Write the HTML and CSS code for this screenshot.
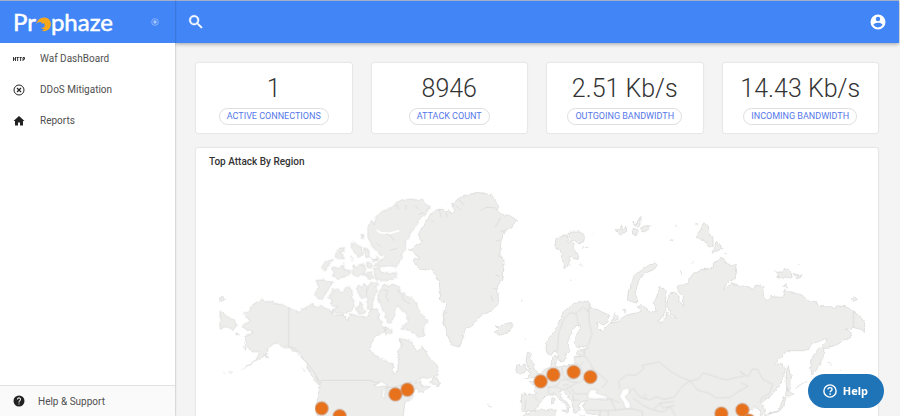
FILE: index.html
```html
<!DOCTYPE html>
<html lang="en">
<head>
<meta charset="utf-8">
<title>Prophaze Dashboard</title>
<link rel="stylesheet" href="styles.css">
</head>
<body>
<div class="app">
  <aside class="sidebar">
    <div class="brand">
      <a class="logo" href="#">Pr<svg class="logo-mark" viewBox="0 0 45 45" aria-hidden="true"><path d="M0 21C3 14 7 6 16 3c10-4 21 0 26 8 6 11 2 24-8 29-6 4-13 4-18 0 5 1 8-1 9-4-4 1-8 0-9-4 5 1 9-1 10-5 1-4-1-8-5-9l-3 4-2-6c-5-2-11 0-16 5z" fill="#f6a81c"/></svg>phaze</a>
      <button class="pin" type="button" aria-label="Pin menu"><svg viewBox="0 0 24 24"><circle cx="12" cy="12" r="10" fill="none" stroke="currentColor" stroke-width="2"/><circle cx="12" cy="12" r="5" fill="currentColor"/></svg></button>
    </div>
    <nav class="menu">
      <a class="item" href="#"><svg class="icon" viewBox="0 0 24 24"><path d="M1 8v8M5 8v8M1 12h4M7 9h4.500M9.200 9v7M13 9h4.500M15.200 9v7M20 16V9h3v3.500h-3" fill="none" stroke="currentColor" stroke-width="1.800"/></svg>Waf DashBoard</a>
      <a class="item" href="#"><svg class="icon" viewBox="0 0 24 24"><circle cx="12" cy="12" r="10" fill="none" stroke="currentColor" stroke-width="2"/><path d="M8 8l8 8M16 8l-8 8" stroke="currentColor" stroke-width="2.400"/></svg>DDoS Mitigation</a>
      <a class="item" href="#"><svg class="icon" viewBox="0 0 24 24"><path d="M10 21v-6h4v6h6v-9h3L12 2 1 12h3v9z" fill="currentColor"/></svg>Reports</a>
    </nav>
    <a class="support" href="#"><svg class="icon" viewBox="0 0 24 24"><path d="M12 1a11 11 0 1 0 0 22 11 11 0 0 0 0-22zm1 18h-2v-2h2v2zm2.070-7.750l-.9.920C13.450 12.900 13 13.500 13 15h-2v-.5c0-1.100.450-2.100 1.170-2.830l1.240-1.260A2 2 0 1 0 10 9H8a4 4 0 1 1 7.070 2.250z" fill="currentColor"/></svg>Help &amp; Support</a>
  </aside>
  <div class="page">
    <header class="topbar">
      <button type="button" aria-label="Search"><svg viewBox="0 0 24 24"><path d="M15.500 14h-.790l-.280-.270A6.500 6.500 0 1 0 13.730 14.430l.270.280v.790l5 4.990L20.490 19zm-6 0a4.500 4.500 0 1 1 0-9 4.500 4.500 0 0 1 0 9z" fill="currentColor" stroke="currentColor" stroke-width=".6"/></svg></button>
      <button type="button" aria-label="Account"><svg viewBox="0 0 24 24"><path d="M12 2a10 10 0 1 0 0 20 10 10 0 0 0 0-20zm0 3a3 3 0 1 1 0 6 3 3 0 0 1 0-6zm0 14.200a7.200 7.200 0 0 1-6-3.220c.030-1.990 4-3.080 6-3.080s5.970 1.090 6 3.080a7.200 7.200 0 0 1-6 3.220z" fill="currentColor"/></svg></button>
    </header>
    <main class="content">
      <section class="stats">
        <article class="card stat"><strong>1</strong><span>ACTIVE CONNECTIONS</span></article>
        <article class="card stat"><strong>8946</strong><span>ATTACK COUNT</span></article>
        <article class="card stat"><strong>2.51 Kb/s</strong><span>OUTGOING BANDWIDTH</span></article>
        <article class="card stat"><strong>14.43 Kb/s</strong><span>INCOMING BANDWIDTH</span></article>
      </section>
      <section class="card region">
        <h2>Top Attack By Region</h2>
        <svg class="map" viewBox="-3 0 1968 720" role="img" aria-label="World map of attacks">
          <defs><filter id="coast" x="0" y="0" width="100%" height="100%" color-interpolation-filters="sRGB"><feTurbulence type="fractalNoise" baseFrequency="0.07" numOctaves="2" seed="4"/><feDisplacementMap in="SourceGraphic" scale="12" xChannelSelector="R" yChannelSelector="G"/></filter></defs>
          <g class="land" filter="url(#coast)">
            <!-- North America -->
            <path d="M100 400L118 392 128 374 155 357 163 366 178 364 200 372 218 374 236 383 265 397 272 388 290 384 300 374 308 370 312 382 335 380 355 388 372 396 362 398 372 406 400 404 412 422 420 402 445 408 470 410 484 390 497 384 510 400 503 420 516 425 520 442 528 440 522 460 500 462 485 488 480 508 490 524 505 530 540 550 550 550 550 562 545 574 553 580 562 576 565 555 568 540 562 515 574 500 570 475 590 480 610 490 612 504 622 514 638 500 655 530 682 556 685 585 660 592 625 598 612 610 632 602 634 618 660 620 640 634 624 636 622 625 608 640 610 650 585 668 580 700 585 725 322 725 322 655 330 615 318 600 300 580 290 550 268 515 250 512 236 500 215 500 205 490 190 492 175 505 170 520 160 530 125 548 95 568 138 540 150 515 125 515 112 500 105 490 108 470 130 455 100 445 95 435 122 425z"/>
            <path d="M30 392L50 408 74 422 82 434 68 450 50 440 30 444zM28 354l8-3 8 7-8 5-8-3zM74 462l14 3-12 3zM100 498l8 2-2 8zM162 526l14 4-10 5zM40 578l7 0M55 577l12-2M275 560l12 15M314 590l18 18-6 6-16-16M672 590l12 8 6 20-28-8z"/>
            <!-- Arctic archipelago -->
            <g transform="translate(300 15)">
              <path d="M196 96L212 82 230 78 232 68 246 68 262 50 300 42 340 46 358 68 348 86 334 96 320 120 302 140 298 156 286 168 288 188 278 204 270 226 262 246 238 242 210 246 192 242 210 228 226 214 212 210 206 198 190 192 182 172 174 158 174 128 184 110 194 116z"/>
              <path d="M192 250L208 250 212 262 258 264 260 278 230 288 196 282zM170 232l14 0 4 16-16 0zM168 264l16-4 6 18-16 4zM198 214l10 4-6 8zM152 150l6 0 2 12zM124 174l10-2 6 10 12 0 6 28-16 4-8-16-10-6zM160 188l14 4 6 24-14 0zM122 212l6 16M128 242l8-2 4 10 8-12 16 2 2 32-14-4-10 8-14-8zM102 232l4 6M78 202l10-12 14-2 0 10-12 4 8 6 2 12-16 2-8-8zM34 250l10-18 22-12 4 6-14 12-4 12-12 6zM62 248l8-2 8 6 10-4 6-10 8 4-2 12 22 2-2 12-20 6-14 10-10-8-10-4 6-6zM180 222l22 0-2 6z"/>
              <path d="M22 286l20-2 10 6 16 4-14 20-14 24-14 4-12-14 10-20zM74 310l10 2 12 10 12-14 12-4 8 20-4 12 10 18-6 22-26 8-26 0-12-10 20-6-20-10 2-14-12-6zM138 308l10-8 6 4 8-6 8 6-4 34-12 2-10-18zM178 294l20-4 6 8-8 28-8 24-2 24-14-2 2-26-6-20zM140 366l8-2 2-14 6 6 2 16 10 8-12 8-14-6zM224 426l22 8 0 10-18 8z"/>
              <path d="M208 318L222 300 262 302 278 324 294 334 316 350 326 376 354 410 340 426 342 450 330 458 300 436 272 432 292 410 288 384 262 364 252 386 246 412 232 414 226 388 216 370 206 344z"/>
            </g>
            <!-- Greenland and Iceland -->
            <path d="M660 104L682 88 700 88 704 98 716 92 726 100 734 96 726 72 748 54 800 37 844 44 866 78 856 92 884 108 895 104 920 120 900 146 886 152 872 188 870 226 882 242 880 292 862 320 866 370 846 392 812 408 786 438 766 446 756 480 750 502 728 496 714 470 700 432 700 400 710 372 692 358 688 306 676 282 662 268 628 268 606 240 630 236 598 208 630 192 635 182 624 162 642 136zM856 434l12 6 16-8 18-4 8 18-34 20-22-10 10-8zM934 360l4 3-4 2M942 480h4M972 498l2 8M830 676l16 6"/>
            <!-- Europe and Asia -->
            <g transform="translate(930 0)">
              <path d="M80 485L78 510 88 525 105 512 112 520 118 545 130 545 138 525 150 510 142 488 150 465 165 440 178 437 180 450 165 470 162 490 170 502 195 498 205 504 175 508 170 520 178 528 165 530 162 550 150 556 125 560 108 562 105 550 114 532 106 526 95 535 93 560 75 570 60 580 45 600 28 605 45 620 48 645 5 642 3 690 20 697 45 690 62 665 75 650 92 645 105 640 120 660 140 675 142 692 152 680 125 655 118 635 130 632 155 665 165 700 180 692 178 670 200 660 190 675 200 700 240 706 235 725 678 725 688 706 668 682 690 690 705 680 718 690 720 705 734 700 730 680 720 672 735 660 755 645 775 620 790 595 796 570 790 555 765 550 802 512 850 512 868 508 875 490 900 484 915 475 923 480 905 500 885 520 872 540 872 565 877 587 895 560 910 530 912 505 930 500 952 495 970 480 995 472 992 455 978 448 1000 442 1034 455 1034 425 1018 408 1000 395 980 380 950 377 945 388 935 380 895 380 890 365 865 362 845 345 795 330 788 352 755 350 742 363 730 345 732 320 710 315 702 328 670 318 645 315 635 310 610 330 618 312 645 295 650 270 645 255 615 250 615 238 602 232 580 250 580 262 540 270 515 285 505 310 475 318 475 335 490 350 492 380 480 365 470 340 450 340 440 370 450 400 470 415 450 410 440 395 430 430 415 425 430 405 438 385 435 330 420 320 410 350 402 370 408 395 395 395 365 378 350 376 362 395 320 405 305 415 290 425 275 430 295 412 285 398 280 415 270 430 255 445 245 455 235 445 232 428 250 435 265 425 265 405 235 390 215 385 208 370 190 362 160 372 130 395 120 420 105 450z"/>
              <!-- British Isles, Mediterranean islands, North Africa -->
              <path d="M22 518l12 2-4 16 10 14 6 18 10 14-14 10-26 4 14-14-10-10 8-8-10-18zM0 556l14-4 6 12-4 14-16 4-14-4 4-18zM96 650l6 4-2 18-6 0zM128 690l18 2-4 8zM-4 725L16 704 60 690 106 688 102 725zM176 704l16 2"/>
              <!-- Svalbard, Franz Josef, Novaya Zemlya, Severnaya Zemlya -->
              <path d="M106 176l24-8 8-4 6 20 14 2 6 26 16 16-6 10-14-2-10-8-4 26-10 12-10-30-6-26-12-4zM146 156l34 0 14 12-4 18-16 2-22-10-12-10zM216 162l10-2M186 205l18-4M180 258l6-4M286 152l14-6 6-8 2 10 10-6-2 16-16 4zM338 126l10 6 12-20 0 22-8 8zM336 144l12 4 8 6-8 14-10-6zM362 144l14-8 16 2-6 10-14 8-8-4zM322 360l4-30 16-40 24-24 40-20 8 8-14 16-26 10-18 22-10 36 8 30-12 0zM530 176l8-20 14-28 14 14 0 22 12 6 2 26-14 6-16-24-14 0zM576 220l16-34 14 20zM468 138h6M452 180l6 3M526 130l6 2M480 270l6 14M520 244l-2 6M550 270l12-4M612 216l8 3M304 392l12-4 0 12M150 300h3"/>
              <path d="M770 276l18 0 6-12 22 14-2 12-20 6-20-6zM820 280l26 8-18 6zM788 322l10-12 8 14zM994 360l10-10 8 8-16 6zM764 272l4 8M832 254h4M924 548l12 8M960 570h4M862 600l-36 26M802 560l12 26-4 14 0 26-10 8-2-40zM796 644l6-18 22 18-18 10zM798 652l-6 24-14 18-28 8-18 10 4-8 40-12 10-26 4-16z"/>
            </g>
          </g>
          <g class="water">
            <path d="M500 150L512 158 538 160 568 152" class="channel"/>
            <path d="M490 614l14-2 8-10 24 18-20-2-12 4zM518 630l8-6-2 32-8-6zM530 622l16 20-8 8z"/>
            <g transform="translate(930 0)"><path d="M205 640l8-12 20 2-6 8 36 12-2 10-35-3-23-2zM306 630l19-8 3 16-13 12 15 20 2 15-15 2-9-24-10-12zM368 648l10-4 0 10z"/></g>
          </g>
          <g class="borders">
            <path d="M528 160L546 172 552 182M500 190L512 200M540 210L560 206M566 88L560 74M590 74L586 88M616 76L624 88M640 98L626 104M520 330L532 330 528 350 536 366M560 330L576 342 580 360 600 372"/>
            <path d="M664 120L672 128M688 90L694 112M708 98L712 112M736 76L752 90M744 58L764 76M812 92L828 82 858 84M872 112L856 142M884 150L870 156M870 180L858 184M868 290L856 284M862 328L848 324M850 364L842 346M700 404L712 396"/>
            <path d="M236 383V500L252 504 270 528 290 548 315 580 326 604M334 601H480L498 608 512 606M528 622L552 622 590 610 606 604"/>
            <g transform="translate(930 0)">
              <path d="M112 515L116 460 130 420 150 398 168 400 176 436M168 400L190 380 204 395 210 372M206 385L208 430 216 462 204 496M196 506L192 525 210 548 218 566 254 596 262 604 246 624M165 530L194 528M165 548L180 558 190 545M180 558L188 580 160 596 122 600 108 620 85 622 60 600M126 562L128 586 148 604 178 608 200 590M85 622L86 642M108 620L130 630 150 620 170 608M150 620L166 642 202 642M128 616L146 612M158 642L160 660 178 660M142 628L152 640M182 508L196 520"/>
              <path d="M300 628L296 604 320 584 348 586 372 566 366 556 418 546 452 574 484 592 510 602 486 620 462 652 430 658 410 650 388 660 358 650 340 624 326 640M510 602L534 598 550 578 584 590 620 600 650 592 674 588 660 574 684 590 696 568 712 566 728 598 758 612 748 642 726 652 720 668M510 602L532 630 568 640 588 654 630 652 656 634 684 618 662 608M232 656L270 656 288 690 264 692 200 690M270 656L298 668M288 690L330 685 366 694 370 720M340 655L372 678 398 690 420 670 464 664M398 690L432 696 450 680 474 720M420 670L430 684 464 676M240 690L240 720M264 692L266 720M44 652L56 664M18 658L14 694M1000 395V442"/>
            </g>
          </g>
          <g class="pins"><circle cx="335" cy="685" r="20"/><circle cx="389" cy="708" r="20"/><circle cx="556" cy="643" r="20"/><circle cx="592" cy="629" r="20"/><circle cx="992" cy="604" r="20"/><circle cx="1030" cy="584" r="20"/><circle cx="1091" cy="576" r="20"/><circle cx="1141" cy="591" r="20"/><circle cx="1534" cy="701" r="20"/><circle cx="1597" cy="690" r="20"/><circle cx="1617" cy="722" r="20"/></g>
        </svg>
      </section>
    </main>
  </div>
</div>
<button class="help" type="button"><svg viewBox="0 0 24 24" aria-hidden="true"><circle cx="12" cy="12" r="10.500" fill="none" stroke="currentColor" stroke-width="2.400"/><path d="M8.500 9.500c0-2 1.500-3.200 3.500-3.200s3.500 1.200 3.500 3c0 2.500-3.300 2.500-3.300 5" fill="none" stroke="currentColor" stroke-width="2.300"/><circle cx="12.200" cy="17.300" r="1.500" fill="currentColor"/></svg>Help</button>
</body>
</html>
```
FILE: styles.css
```css
* { box-sizing: border-box; }

body {
  margin: 0;
  background: #f4f4f4;
  font-family: Roboto, "Liberation Sans", sans-serif;
  font-size: 10px;
  color: #505050;
}

a { color: inherit; text-decoration: none; }

button {
  border: 0;
  padding: 0;
  background: none;
  color: inherit;
  font: inherit;
}

svg { display: block; }

.app {
  display: flex;
  height: 100vh;
  overflow: hidden;
  padding-right: 1px;
}

.sidebar {
  flex: 0 0 175px;
  display: flex;
  flex-direction: column;
  background: #fff;
  box-shadow: 0 0 2px rgba(0, 0, 0, 0.35);
  z-index: 2;
}

.brand,
.topbar {
  flex: none;
  display: flex;
  align-items: center;
  justify-content: space-between;
  height: 43px;
  border-top: 1px solid #a3aecb;
  background: #4285f6;
  color: #fff;
}

.brand { padding: 0 16px 0 13px; }

.logo {
  display: flex;
  align-items: center;
  font-family: Lato, sans-serif;
  font-size: 24px;
  line-height: 40px;
  -webkit-text-stroke: 0.5px #fff;
}

.logo-mark { width: 15px; height: 15px; margin-top: 4px; }

.pin { color: #a9c8fb; }
.pin svg { width: 8px; height: 8px; }

.menu {
  flex: 1;
  display: flex;
  flex-direction: column;
}

.item,
.support {
  display: flex;
  align-items: center;
  gap: 15px;
  height: 31px;
  padding-left: 13px;
}

.icon { width: 12px; height: 12px; color: #222; }

.support {
  gap: 13px;
  border-top: 1px solid #e2e2e2;
  background: #fafafa;
}

.page {
  flex: 1;
  display: flex;
  flex-direction: column;
  min-width: 0;
}

.topbar {
  padding: 0 12px;
  box-shadow: 0 1px 4px rgba(0, 0, 0, 0.35);
  z-index: 1;
}

.topbar svg { width: 18px; height: 18px; }

.content {
  flex: 1;
  min-height: 0;
  overflow: hidden;
  padding: 20px 21px;
}

.card {
  border-radius: 2px;
  background: #fff;
  box-shadow: 0 0 2px rgba(0, 0, 0, 0.2);
}

.stats {
  display: grid;
  grid-template-columns: repeat(4, 1fr);
  gap: 20px;
  margin-bottom: 15px;
}

.stat {
  display: flex;
  flex-direction: column;
  align-items: center;
  gap: 4px;
  padding: 11px 0 8px;
}

.stat strong {
  font-family: "Roboto Light", Roboto, sans-serif;
  font-size: 25px;
  font-weight: 200;
  line-height: 30px;
  color: #333;
}

.stat span {
  padding: 0 7px;
  border: 1px solid #dedede;
  border-radius: 9px;
  font-size: 9px;
  line-height: 15px;
  color: #5578ea;
}

.region { padding: 7px 13px; }

.region h2 {
  margin: 0 0 11px;
  font-size: 10px;
  font-weight: 500;
  line-height: 14px;
  color: #333;
}

.map { width: 100%; }

.land {
  fill: #ededec;
  stroke: #d4d4d4;
  stroke-width: 2;
  stroke-linejoin: round;
}

.water { fill: #fff; stroke: #d8d8d8; stroke-width: 2; }
.water .channel { fill: none; stroke: #fff; stroke-width: 5; }
.borders { fill: none; stroke: #d6d6d6; stroke-width: 2; }
.pins { fill: #e8711c; stroke: #b9a69b; stroke-width: 2; }

.help {
  position: fixed;
  right: 16px;
  bottom: 8px;
  display: flex;
  align-items: center;
  gap: 6px;
  height: 34px;
  padding: 0 16px 0 15px;
  border-radius: 17px;
  background: #1f73b7;
  color: #fff;
  font: 700 11px/34px "Noto Sans", sans-serif;
  z-index: 3;
}

.help svg { width: 14px; height: 14px; }
```
